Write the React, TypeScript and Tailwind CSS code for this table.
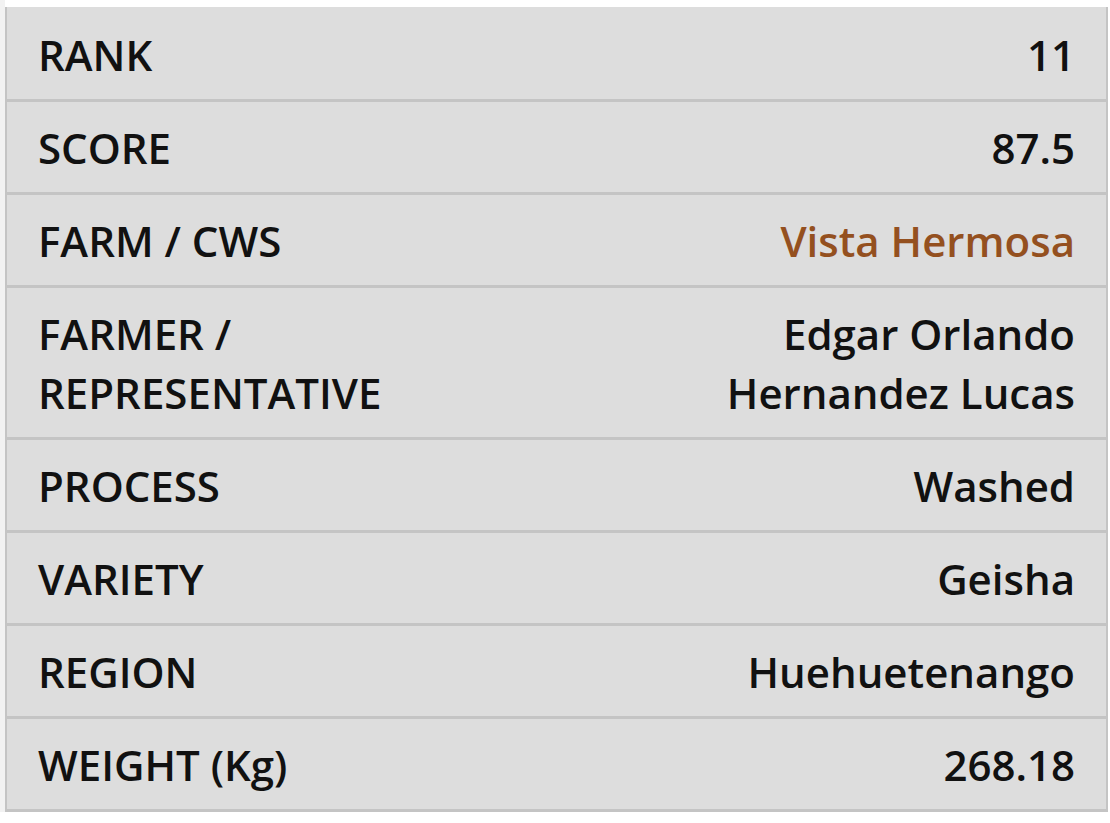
const rows: { label: string[]; value: string[]; accent?: boolean }[] = [
  { label: ["RANK"], value: ["11"] },
  { label: ["SCORE"], value: ["87.5"] },
  { label: ["FARM / CWS"], value: ["Vista Hermosa"], accent: true },
  { label: ["FARMER /", "REPRESENTATIVE"], value: ["Edgar Orlando", "Hernandez Lucas"] },
  { label: ["PROCESS"], value: ["Washed"] },
  { label: ["VARIETY"], value: ["Geisha"] },
  { label: ["REGION"], value: ["Huehuetenango"] },
  { label: ["WEIGHT (Kg)"], value: ["268.18"] },
];

export default function App() {
  return (
    <main className="min-h-screen bg-white font-['Open_Sans',sans-serif] text-[#111]">
      <div className="flex">
        <div className="w-[5px] shrink-0 bg-[#f2f2f2]" />
        <div className="mt-[7px] w-[1103px] border-x-2 border-[#c4c4c4] bg-[#dddddd] pt-[2px]">
          {rows.map((r) => (
            <div
              key={r.label.join(" ")}
              className="flex items-start justify-between border-b-[3px] border-[#c4c4c4] pt-[16px] pb-[15px] pl-[31px] pr-[31px] text-[42px] leading-[59px] font-semibold"
            >
              <div>
                {r.label.map((l) => (
                  <div key={l}>{l}</div>
                ))}
              </div>
              <div className={`text-right ${r.accent ? "text-[#94501f]" : ""}`}>
                {r.value.map((v) => (
                  <div key={v}>{v}</div>
                ))}
              </div>
            </div>
          ))}
        </div>
      </div>
    </main>
  );
}
